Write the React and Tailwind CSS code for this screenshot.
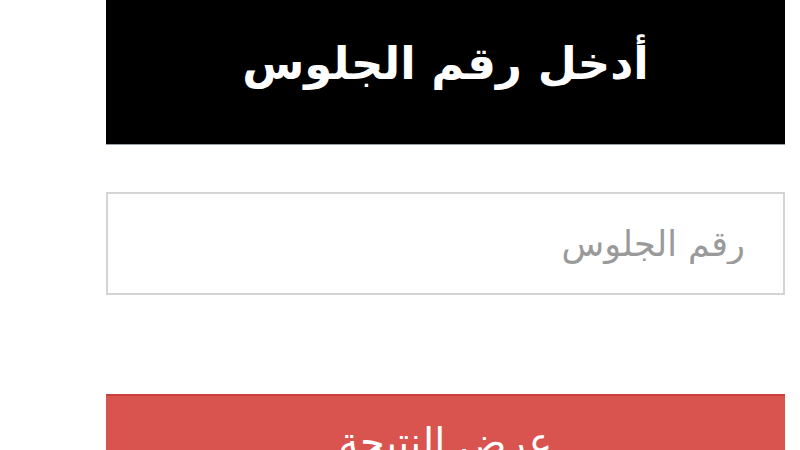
export default function App() {
  return (
    <div
      className="w-[800px] h-[450px] overflow-hidden bg-white pl-[106px]"
      style={{ fontFamily: '"DejaVu Sans", "Noto Sans", sans-serif' }}
    >
      <div dir="rtl" className="w-[679px] flex flex-col">
        {/* Title */}
        <div className="h-[145px] shrink-0 bg-black flex items-center justify-center border-b border-gray-400">
          <h1 className="text-white text-[45px] font-bold leading-none pb-[18px]">
            أدخل رقم الجلوس
          </h1>
        </div>

        {/* Input */}
        <input
          type="text"
          placeholder="رقم الجلوس"
          className="mt-[47px] h-[103px] shrink-0 w-full border-2 border-[#d4d4d4] bg-white pr-[38px] pl-4 text-[35px] text-gray-700 placeholder:text-[#9a9a9a] outline-none"
        />

        {/* Button */}
        <button className="mt-[99px] h-[100px] shrink-0 w-full bg-[#d9534f] border-t-2 border-[#c9403c] text-white text-[40px] leading-none pt-[26px] flex justify-center items-start">
          عرض النتيجة
        </button>
      </div>
    </div>
  );
}
